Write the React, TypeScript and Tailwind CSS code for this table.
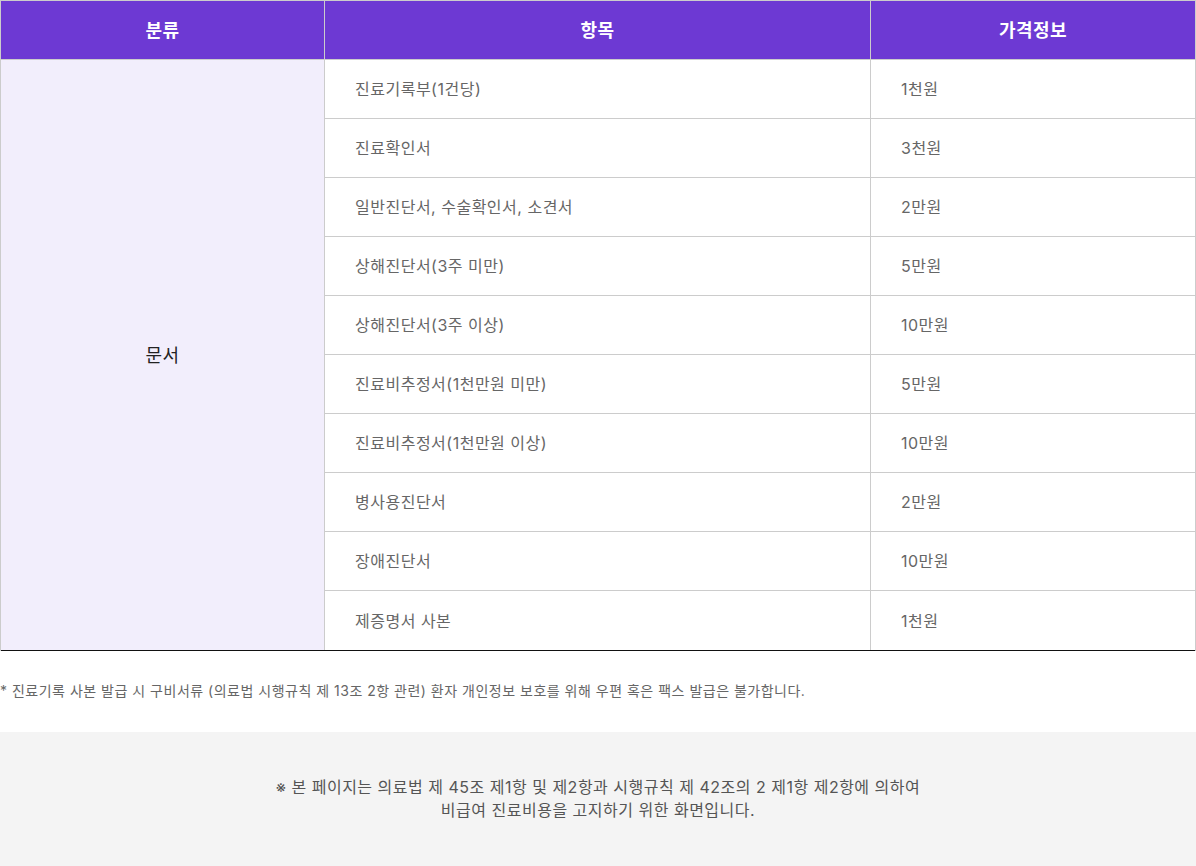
import React from "react";

const rows: [string, string][] = [
  ["진료기록부(1건당)", "1천원"],
  ["진료확인서", "3천원"],
  ["일반진단서, 수술확인서, 소견서", "2만원"],
  ["상해진단서(3주 미만)", "5만원"],
  ["상해진단서(3주 이상)", "10만원"],
  ["진료비추정서(1천만원 미만)", "5만원"],
  ["진료비추정서(1천만원 이상)", "10만원"],
  ["병사용진단서", "2만원"],
  ["장애진단서", "10만원"],
  ["제증명서 사본", "1천원"],
];

export default function App() {
  const font = { fontFamily: 'Inter, "Noto Sans CJK KR", sans-serif' };
  return (
    <div className="w-[1196px] h-[866px] bg-white tracking-[0.5px]" style={font}>
      <div className="border-t border-l border-r border-[#cccccc]">
        <div className="flex h-[59px] bg-[#6d39d3] border-b border-[#cccccc] text-white font-bold text-[18px]">
          <div className="w-[324px] border-r border-[#cccccc] flex items-center justify-center">분류</div>
          <div className="w-[546px] border-r border-[#cccccc] flex items-center justify-center">항목</div>
          <div className="flex-1 flex items-center justify-center">가격정보</div>
        </div>
        <div className="flex border-b border-[#111111]">
          <div className="w-[324px] bg-[#f2eefc] border-r border-[#cccccc] flex items-center justify-center text-[18px] text-[#222222]">
            문서
          </div>
          <div className="flex-1 flex flex-col">
            {rows.map(([item, price], i) => (
              <div
                key={i}
                className={`flex h-[59px] text-[16px] text-[#666666] ${i < rows.length - 1 ? "border-b border-[#cccccc]" : ""}`}
              >
                <div className="w-[546px] border-r border-[#cccccc] flex items-center pl-[30px]">{item}</div>
                <div className="flex-1 flex items-center pl-[30px]">{price}</div>
              </div>
            ))}
          </div>
        </div>
      </div>
      <p className="mt-[30px] text-[14px] leading-[20px] text-[#666666]">
        * 진료기록 사본 발급 시 구비서류 (의료법 시행규칙 제 13조 2항 관련) 환자 개인정보 보호를 위해 우편 혹은 팩스 발급은 불가합니다.
      </p>
      <div className="mt-[31px] h-[135px] bg-[#f4f4f4] flex flex-col items-center pt-[44px] text-[16px] leading-[23px] text-[#555555]">
        <p>※ 본 페이지는 의료법 제 45조 제1항 및 제2항과 시행규칙 제 42조의 2 제1항 제2항에 의하여</p>
        <p>비급여 진료비용을 고지하기 위한 화면입니다.</p>
      </div>
    </div>
  );
}
